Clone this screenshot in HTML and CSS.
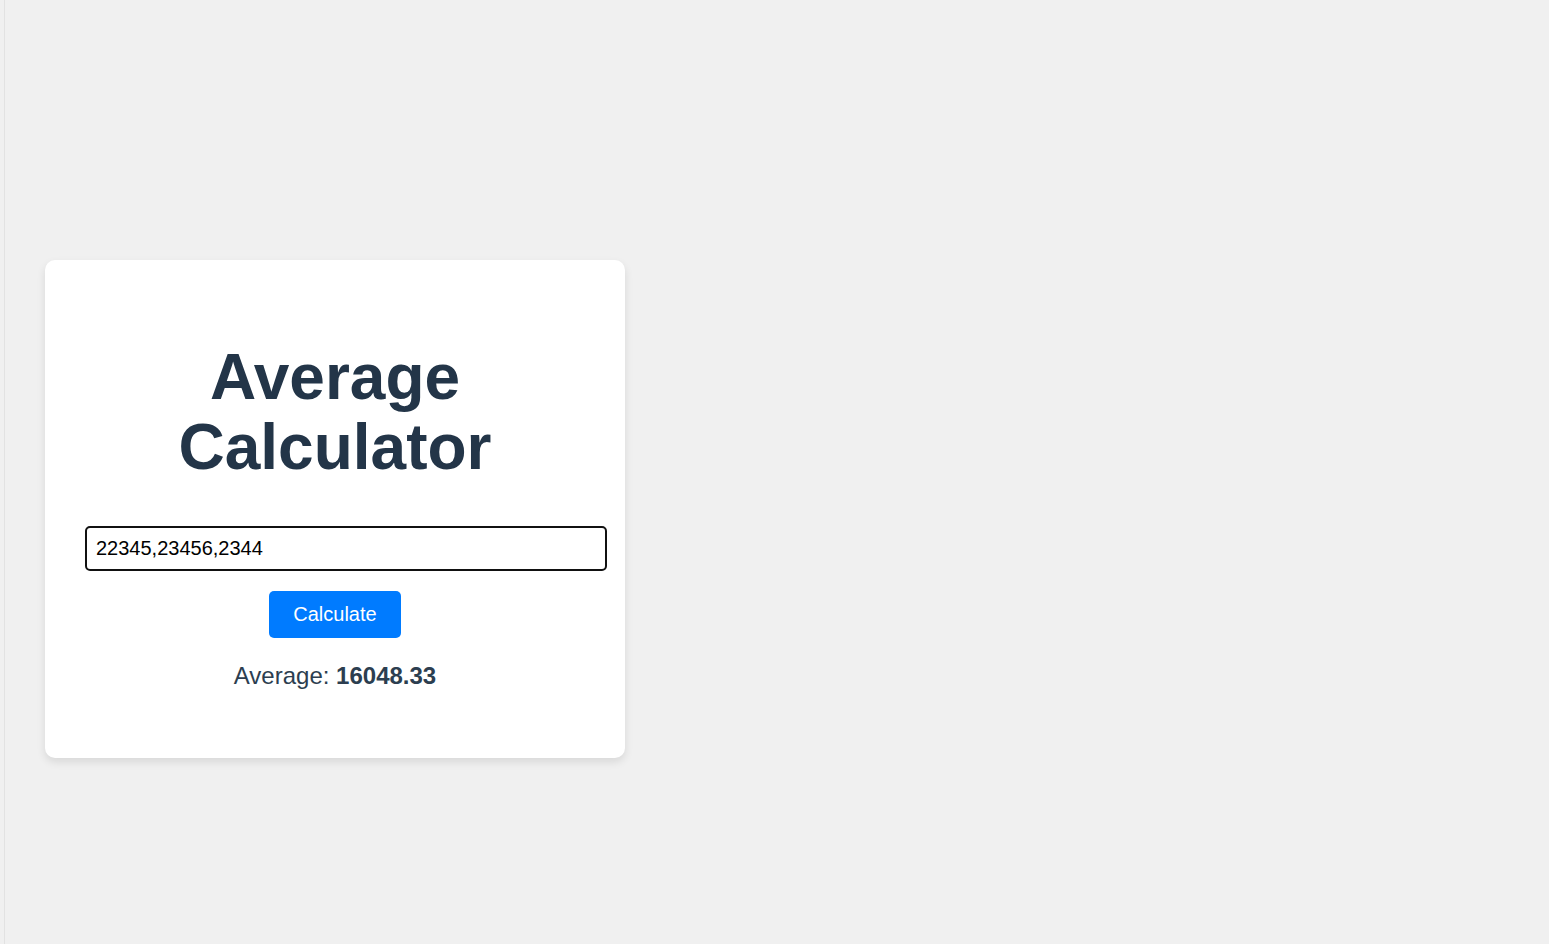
FILE: index.html
```html
<!DOCTYPE html>
<html lang="en">
<head>
<meta charset="utf-8">
<title>Average Calculator</title>
<link rel="stylesheet" href="styles.css">
</head>
<body>
<div class="frame">
  <div class="card">
    <h1 class="title">Average Calculator</h1>
    <input class="numbers" type="text" value="22345,23456,2344">
    <button class="calc">Calculate</button>
    <p class="result">Average: <strong>16048.33</strong></p>
  </div>
</div>
</body>
</html>
```

FILE: styles.css
```css
html, body {
  margin: 0;
  padding: 0;
  background: #f0f0f0;
  font-family: "Liberation Sans", Arial, sans-serif;
}
.frame {
  margin-left: 4px;
  border-left: 1px solid #e2e2e2;
  min-height: 100vh;
  box-sizing: border-box;
  padding-top: 260px;
  padding-left: 40px;
}
.card {
  width: 500px;
  padding: 40px;
  background: #fff;
  border-radius: 10px;
  box-shadow: 0 4px 8px rgba(0, 0, 0, 0.1);
  text-align: center;
  display: flex;
  flex-direction: column;
  align-items: center;
}
.title {
  margin: 42px 0 44px;
  font-size: 64px;
  line-height: 70px;
  font-weight: bold;
  color: #233548;
  width: 340px;
}
.numbers {
  align-self: flex-start;
  width: 500px;
  height: 21px;
  line-height: 21px;
  padding: 10px 9px;
  font-size: 20px;
  font-family: "Liberation Sans", Arial, sans-serif;
  border: 2px solid #111;
  border-radius: 5px;
  outline: none;
  color: #000;
  box-sizing: content-box;
}
.calc {
  margin-top: 20px;
  padding: 12px 24px;
  border: none;
  border-radius: 5px;
  background: #007bff;
  color: #fff;
  font-size: 20px;
  font-family: "Liberation Sans", Arial, sans-serif;
}
.result {
  margin: 24px 0 28px;
  font-size: 24px;
  color: #2c3e50;
}
.result strong {
  font-weight: bold;
}
```
